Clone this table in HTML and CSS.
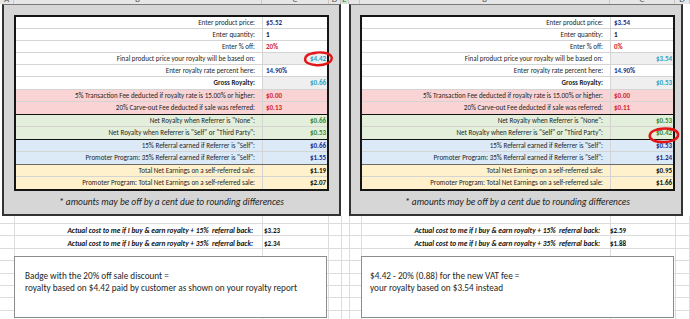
FILE: index.html
```html
<!DOCTYPE html>
<html>
<head>
<meta charset="utf-8">
<link rel="stylesheet" href="styles.css">
</head>
<body>
<div class="colhead">
  <div class="c w-a"><span>A</span></div>
  <div class="c w-b"><span>B</span></div>
  <div class="c w-c"><span>C</span></div>
  <div class="c w-d"><span>D</span></div>
  <div class="c w-e sel"><span>E</span></div>
  <div class="c w-a2"><span></span></div>
  <div class="c w-b2"><span>B</span></div>
  <div class="c w-c2"><span>C</span></div>
  <div class="c w-d2"><span>D</span></div>
</div>

<div class="panels">
  <section class="panel panel-left">
    <div class="calc">
      <div class="sec sec-white">
        <div class="row"><span class="lab">Enter product price:</span><span class="val in-blue">$5.52</span></div>
        <div class="row"><span class="lab">Enter quantity:</span><span class="val in-black">1</span></div>
        <div class="row"><span class="lab">Enter % off:</span><span class="val in-red">20%</span></div>
        <div class="row"><span class="lab">Final product price your royalty will be based on:</span><span class="val out r teal">$4.42<svg class="ring ring-left" viewBox="0 0 30 16"><path d="M9 2.2 C16 0.6 27 1.2 28.2 6.5 C29.2 11.5 21 14.6 13 14.2 C5 13.8 1.2 11 1.6 7.8 C2 4.6 6.5 2.4 12 2"/></svg></span></div>
        <div class="row"><span class="lab">Enter royalty rate percent here:</span><span class="val in-blue">14.90%</span></div>
        <div class="row"><span class="lab bold">Gross Royalty:</span><span class="val out r teal">$0.66</span></div>
      </div>
      <div class="sec sec-pink">
        <div class="row"><span class="lab">5% Transaction Fee deducted if royalty rate is 15.00% or higher:</span><span class="val in-red">$0.00</span></div>
        <div class="row"><span class="lab">20% Carve-out Fee deducted if sale was referred:</span><span class="val in-red">$0.13</span></div>
      </div>
      <div class="sec sec-green">
        <div class="row"><span class="lab">Net Royalty when Referrer is "None":</span><span class="val r green">$0.66</span></div>
        <div class="row"><span class="lab">Net Royalty when Referrer is "Self" or "Third Party":</span><span class="val r green">$0.53</span></div>
      </div>
      <div class="sec sec-blue">
        <div class="row"><span class="lab">15% Referral earned if Referrer is "Self":</span><span class="val r navy">$0.66</span></div>
        <div class="row"><span class="lab">Promoter Program: 35% Referral earned if Referrer is "Self":</span><span class="val r navy">$1.55</span></div>
      </div>
      <div class="sec sec-yellow">
        <div class="row"><span class="lab">Total Net Earnings on a self-referred sale:</span><span class="val r in-black">$1.19</span></div>
        <div class="row"><span class="lab">Promoter Program: Total Net Earnings on a self-referred sale:</span><span class="val r in-black">$2.07</span></div>
      </div>
    </div>
    <p class="note">* amounts may be off by a cent due to rounding differences</p>
  </section>

  <section class="panel panel-right">
    <div class="calc">
      <div class="sec sec-white">
        <div class="row"><span class="lab">Enter product price:</span><span class="val in-blue">$3.54</span></div>
        <div class="row"><span class="lab">Enter quantity:</span><span class="val in-black">1</span></div>
        <div class="row"><span class="lab">Enter % off:</span><span class="val in-red">0%</span></div>
        <div class="row"><span class="lab">Final product price your royalty will be based on:</span><span class="val out r teal">$3.54</span></div>
        <div class="row"><span class="lab">Enter royalty rate percent here:</span><span class="val in-blue">14.90%</span></div>
        <div class="row"><span class="lab bold">Gross Royalty:</span><span class="val out r teal">$0.53</span></div>
      </div>
      <div class="sec sec-pink">
        <div class="row"><span class="lab">5% Transaction Fee deducted if royalty rate is 15.00% or higher:</span><span class="val in-red">$0.00</span></div>
        <div class="row"><span class="lab">20% Carve-out Fee deducted if sale was referred:</span><span class="val in-red">$0.11</span></div>
      </div>
      <div class="sec sec-green">
        <div class="row"><span class="lab">Net Royalty when Referrer is "None":</span><span class="val r green">$0.53</span></div>
        <div class="row"><span class="lab">Net Royalty when Referrer is "Self" or "Third Party":</span><span class="val r green">$0.42<svg class="ring ring-right" viewBox="0 0 30 16"><path d="M9 2.2 C16 0.6 27 1.2 28.2 6.5 C29.2 11.5 21 14.6 13 14.2 C5 13.8 1.2 11 1.6 7.8 C2 4.6 6.5 2.4 12 2"/></svg></span></div>
      </div>
      <div class="sec sec-blue">
        <div class="row"><span class="lab">15% Referral earned if Referrer is "Self":</span><span class="val r navy">$0.53</span></div>
        <div class="row"><span class="lab">Promoter Program: 35% Referral earned if Referrer is "Self":</span><span class="val r navy">$1.24</span></div>
      </div>
      <div class="sec sec-yellow">
        <div class="row"><span class="lab">Total Net Earnings on a self-referred sale:</span><span class="val r in-black">$0.95</span></div>
        <div class="row"><span class="lab">Promoter Program: Total Net Earnings on a self-referred sale:</span><span class="val r in-black">$1.66</span></div>
      </div>
    </div>
    <p class="note">* amounts may be off by a cent due to rounding differences</p>
  </section>
</div>

<div class="below">
  <div class="half half-left">
    <div class="cost"><span class="cost-lab">Actual cost to me if I buy &amp; earn royalty + 15%&nbsp; referral back:</span><span class="cost-val">$3.23</span></div>
    <div class="cost"><span class="cost-lab">Actual cost to me if I buy &amp; earn royalty + 35%&nbsp; referral back:</span><span class="cost-val">$2.34</span></div>
    <div class="textbox">
      <p>Badge with the 20% off sale discount =</p>
      <p>royalty based on $4.42 paid by customer as shown on your royalty report</p>
    </div>
  </div>
  <div class="half half-right">
    <div class="cost"><span class="cost-lab">Actual cost to me if I buy &amp; earn royalty + 15%&nbsp; referral back:</span><span class="cost-val">$2.59</span></div>
    <div class="cost"><span class="cost-lab">Actual cost to me if I buy &amp; earn royalty + 35%&nbsp; referral back:</span><span class="cost-val">$1.88</span></div>
    <div class="textbox">
      <p>$4.42 - 20% (0.88) for the new VAT fee =</p>
      <p>your royalty based on $3.54 instead</p>
    </div>
  </div>
</div>
</body>
</html>
```
FILE: styles.css
```css
* { box-sizing: border-box; margin: 0; padding: 0; }

body {
  width: 690px;
  height: 319px;
  overflow: hidden;
  background: #fff;
  font-family: Carlito, Lato, "Liberation Sans", sans-serif;
  color: #262626;
}

/* column header strip */
.colhead {
  display: flex;
  height: 4px;
  background: #e6e6e6;
}
.colhead .c {
  overflow: hidden;
  text-align: center;
  font-size: 9px;
  line-height: 9px;
  color: #555;
  border-right: 1px solid #c8c8c8;
}
.colhead .c span { display: block; margin-top: -6px; }
.colhead .sel { background: #d2e6d5; }
.w-a { width: 14px; }
.w-b { width: 248px; }
.w-c { width: 67px; }
.w-d { width: 12px; }
.w-e { width: 8px; }
.w-a2 { width: 11px; }
.w-b2 { width: 250px; }
.w-c2 { width: 65px; }
.w-d2 { width: 15px; }

/* panels */
.panels {
  display: flex;
  gap: 8px;
  padding-left: 2px;
}
.panel {
  background: #d6d6d6;
  border: 2px solid #333;
  border-top: 1px solid #7a7a7a;
  padding: 10px 10px 0 10px;
}
.panel-right { padding: 10px 6px 0 9px; }

.calc {
  width: 315px;
  border: 2px solid #151515;
  background: #fff;
}
.row {
  display: grid;
  height: 12px;
  border-bottom: 1px solid #d4d4d4;
  font-size: 7px;
  line-height: 11px;
  white-space: nowrap;
}
.panel-left .row { grid-template-columns: 246px 1fr; }
.panel-right .row { grid-template-columns: 248px 1fr; }
.sec .row:last-child { border-bottom: none; }

.lab { text-align: right; padding-right: 7px; overflow: hidden; }
.bold { font-weight: bold; }
.val {
  position: relative;
  font-weight: bold;
  padding: 0 2px 0 3px;
  border-left: 1px solid #d4d4d4;
}
.val.r { text-align: right; padding-right: 1px; }
.val.out { background: #efefef; }

.in-blue { color: #24318a; }
.in-black { color: #111; }
.in-red { color: #d3262c; }
.teal { color: #2ea3c6; }
.green { color: #3f8a2c; }
.navy { color: #1d2d8c; }

.sec-pink .row { background: #fad4d4; }
.sec-green .row { background: #e3efdb; }
.sec-blue .row { background: #dce9f6; }
.sec-yellow .row { background: #fff1cb; }
.sec-white { border-bottom: 1px solid #d4d4d4; }
.sec-green, .sec-blue { border-top: 1px solid #111; }
.sec-yellow { border-top: 1px solid #6a6a6a; }

.ring {
  position: absolute;
  z-index: 2;
  width: 31px;
  height: 16px;
  overflow: visible;
}
.ring path {
  fill: none;
  stroke: #e11717;
  stroke-width: 2.4;
  stroke-linecap: round;
}
.ring-left { left: 40px; top: -2px; }
.ring-right { left: 37px; top: 0; width: 32px; height: 17px; }

.note {
  height: 23px;
  line-height: 23px;
  text-align: center;
  font-style: italic;
  font-size: 9.4px;
  color: #222;
}

/* below the panels: sheet gridlines */
.below {
  display: flex;
  height: 104px;
  background:
    linear-gradient(#dcdcdc, #dcdcdc) 14px 0 / 1px 100% no-repeat,
    linear-gradient(#dcdcdc, #dcdcdc) 262px 0 / 1px 100% no-repeat,
    linear-gradient(#dcdcdc, #dcdcdc) 328px 0 / 1px 100% no-repeat,
    linear-gradient(#dcdcdc, #dcdcdc) 341px 0 / 1px 100% no-repeat,
    linear-gradient(#dcdcdc, #dcdcdc) 349px 0 / 1px 100% no-repeat,
    linear-gradient(#dcdcdc, #dcdcdc) 361px 0 / 1px 100% no-repeat,
    linear-gradient(#dcdcdc, #dcdcdc) 610px 0 / 1px 100% no-repeat,
    linear-gradient(#dcdcdc, #dcdcdc) 675px 0 / 1px 100% no-repeat,
    linear-gradient(#dcdcdc, #dcdcdc) 689px 0 / 1px 100% no-repeat,
    repeating-linear-gradient(to bottom, transparent 0 7px, #dcdcdc 7px 8px, transparent 8px 12.4px);
}
.half { width: 345px; padding-top: 8px; }
.half-left { padding-left: 14px; }
.half-right { padding-left: 15px; }

.cost {
  display: grid;
  height: 13px;
  line-height: 13px;
  white-space: nowrap;
}
.half-left .cost { grid-template-columns: 248px 67px; }
.half-right .cost { grid-template-columns: 250px 65px; }
.cost-lab {
  text-align: right;
  padding-right: 9px;
  font-weight: bold;
  font-style: italic;
  font-size: 7.4px;
  color: #111;
}
.half-right .cost-lab { padding-right: 10px; }
.cost-val {
  font-weight: bold;
  font-size: 7px;
  padding-left: 2px;
  color: #111;
}
.half-right .cost-val { padding-left: 0; }

.textbox {
  margin-top: 6px;
  width: 313px;
  height: 62px;
  border: 1px solid #8c8c8c;
  background: #fff;
  padding: 13px 0 0 10px;
  font-size: 9.2px;
  line-height: 12.4px;
  color: #1e1e1e;
}
.half-right .textbox { margin-left: 1px; padding-left: 8px; }
```
